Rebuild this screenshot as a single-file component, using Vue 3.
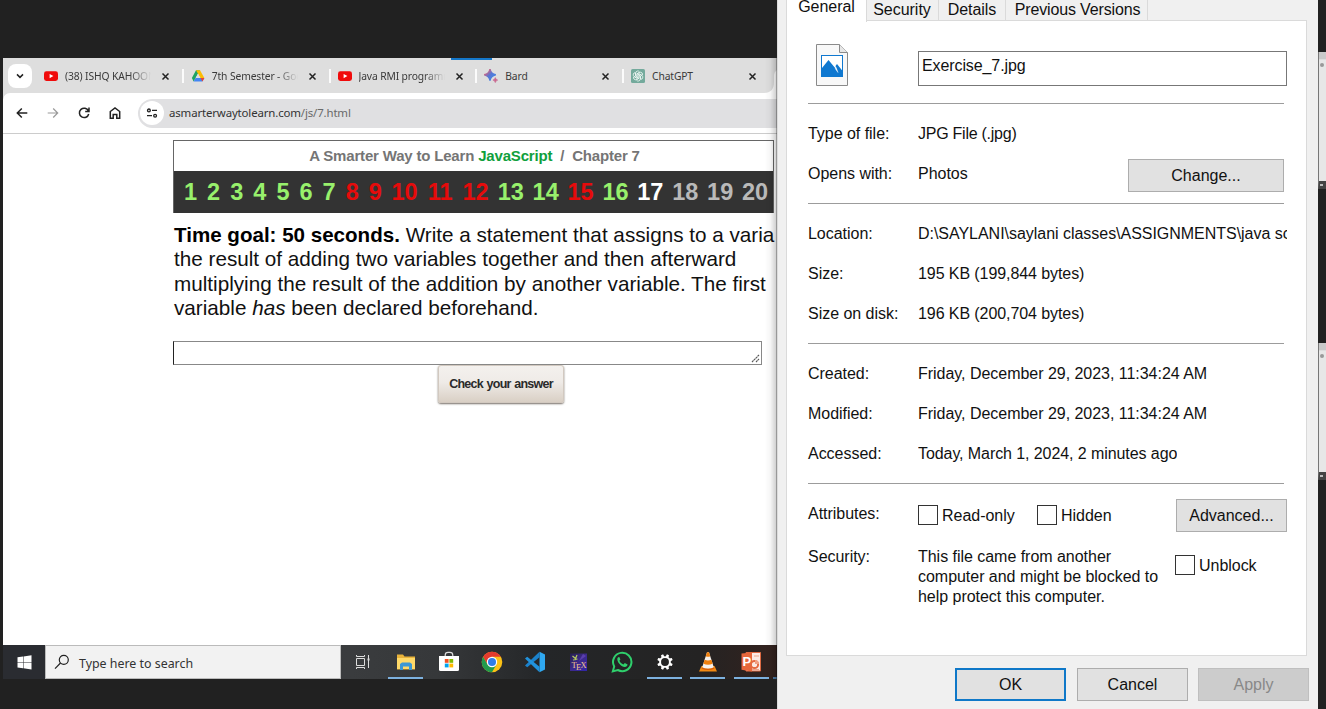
<script setup>
const tabs = [
  { icon: 'youtube', title: '(38) ISHQ KAHOON', fade: true },
  { icon: 'drive', title: '7th Semester - Goo', fade: true },
  { icon: 'youtube', title: 'Java RMI programm', fade: true },
  { icon: 'bard', title: 'Bard' },
  { icon: 'gpt', title: 'ChatGPT' },
]
const red = [8, 9, 10, 11, 12, 15]
const chapters = Array.from({ length: 20 }, (_, i) => {
  const n = i + 1
  const tone = n === 17 ? 'white' : n > 17 ? 'grey' : red.includes(n) ? 'red' : 'green'
  return { n, tone }
})
const apps = ['explorer', 'store', 'chrome', 'vscode', 'tex', 'whatsapp', 'settings', 'vlc', 'powerpoint']
const open = ['explorer', 'settings', 'vlc', 'powerpoint']
const groups = [
  [
    { k: 'Location:', v: 'D:\\SAYLANI\\saylani classes\\ASSIGNMENTS\\java script' },
    { k: 'Size:', v: '195 KB (199,844 bytes)', tight: true },
    { k: 'Size on disk:', v: '196 KB (200,704 bytes)', tight: true },
  ],
  [
    { k: 'Created:', v: 'Friday, December 29, 2023, 11:34:24 AM' },
    { k: 'Modified:', v: 'Friday, December 29, 2023, 11:34:24 AM' },
    { k: 'Accessed:', v: 'Today, March 1, 2024, 2 minutes ago', tight: true },
  ],
]
const teeth = [0, 45, 90, 135, 180, 225, 270, 315]
</script>

<template>
  <div class="desktop">
    <div class="sliver first"><i></i><b></b></div>
    <div class="sliver second"><i></i><b></b></div>

    <div class="browser">
      <div class="accent"></div>
      <div class="strip">
        <div class="chev">
          <svg width="10" height="10" viewBox="0 0 10 10"><path d="M2 3.4l3 3 3-3" fill="none" stroke="#222" stroke-width="1.5" /></svg>
        </div>
        <div v-for="(t, i) in tabs" :key="i" class="tab">
          <svg v-if="t.icon === 'youtube'" class="fav" viewBox="0 0 14 14"><rect y="2.3" width="14" height="9.6" rx="2.4" fill="#f00b0b" /><path d="M5.6 4.9v4.4L9.4 7.1z" fill="#fff" /></svg>
          <svg v-else-if="t.icon === 'drive'" class="fav" viewBox="0 0 14 14">
            <path d="M5 1.2h4L4.6 8.9 2.6 12.4.9 9z" fill="#1fa463" />
            <path d="M5 1.2h4l4.4 7.7H9.4z" fill="#fbbc04" />
            <path d="M4.6 8.9h8.8l-2 3.6H2.6z" fill="#4285f4" />
            <path d="M9.4 8.9h4l-2 3.6z" fill="#ea4335" />
            <path d="M7 4.6l2.4 4.3H4.6z" fill="#dedede" />
          </svg>
          <svg v-else-if="t.icon === 'bard'" class="fav" viewBox="0 0 14 14">
            <defs><linearGradient id="bard" x1="0" x2="1" y1="0" y2="1"><stop offset=".2" stop-color="#d9637c" /><stop offset=".5" stop-color="#5577d6" /><stop offset="1" stop-color="#3d8be8" /></linearGradient></defs>
            <path d="M6 0Q6.8 4.8 11.8 5.8 6.8 6.8 6 11.600 5.200 6.800.2 5.800 5.200 4.800 6 0z" fill="url(#bard)" stroke="url(#bard)" stroke-width="1.400" />
            <path d="M11.300 8.600q.4 2 2.400 2.500-2 .4-2.400 2.500-.4-2.100-2.400-2.500 2-.5 2.400-2.500z" fill="#c9668f" stroke="#c9668f" stroke-width=".6" />
          </svg>
          <svg v-else class="fav" viewBox="0 0 14 14">
            <rect width="14" height="14" rx="1.500" fill="#74aa9c" />
            <g fill="none" stroke="#eef7f4" stroke-width=".8">
              <path v-for="a in [0, 60, 120, 180, 240, 300]" :key="a" :transform="`rotate(${a} 7 7)`" d="M4.700 6.900V4.100a2.100 2.100 0 0 1 3.900-1.100M5.900 7.700V4.800L8.500 3.300" />
            </g>
          </svg>
          <span class="title" :class="{ fade: t.fade }">{{ t.title }}</span>
          <svg class="close" width="9" height="9" viewBox="0 0 9 9"><path d="M1.500 1.500l6 6m0-6l-6 6" stroke="#222" stroke-width="1.500" /></svg>
          <span v-if="i < 4" class="sep"></span>
        </div>
        <svg class="active-edge" width="13" height="25" viewBox="0 0 13 25"><path d="M0 25C7 25 10 21 10 14V8Q10 4 13 2V25z" fill="#fff" /></svg>
      </div>

      <div class="toolbar">
        <svg class="nav" viewBox="0 0 14 14"><path d="M12.300 7H2.500M6.800 2.500L2.300 7l4.500 4.500" stroke="#222" /></svg>
        <svg class="nav" viewBox="0 0 14 14"><path d="M1.700 7h9.800M7.200 2.500L11.700 7l-4.500 4.500" stroke="#9a9a9a" stroke-width="1.200" /></svg>
        <svg class="nav" viewBox="0 0 14 14"><path d="M11.400 4.900A4.700 4.700 0 1 0 11.700 8M12 1.600v3.900H8.200" stroke="#222" /></svg>
        <svg class="nav" viewBox="0 0 14 14"><path d="M2.300 12.300V5.500L7 1.900l4.700 3.600v6.800H8.800V8.600H5.200v3.700z" stroke="#222" /></svg>
        <div class="url">
          <div class="tune">
            <svg width="12" height="12" viewBox="0 0 12 12" fill="none" stroke="#222" stroke-width="1.300"><circle cx="2.900" cy="3.400" r="1.400" /><path d="M6 3.400h5M1 8.700h5" /><circle cx="9.100" cy="8.700" r="1.400" /></svg>
          </div>
          <span>asmarterwaytolearn.com<em>/js/7.html</em></span>
        </div>
      </div>

      <div class="page">
        <div class="banner">
          <div class="heading"><span>A Smarter Way to Learn <b>JavaScript</b>&nbsp; /&nbsp; Chapter 7</span></div>
          <div class="chapters"><span v-for="c in chapters" :key="c.n" :class="c.tone">{{ c.n }}</span></div>
        </div>
        <div class="question">
          <div><b>Time goal: 50 seconds.</b> Write a statement that assigns to a varia</div>
          <div>the result of adding two variables together and then afterward</div>
          <div>multiplying the result of the addition by another variable. The first</div>
          <div>variable <i>has</i> been declared beforehand.</div>
        </div>
        <div class="answer">
          <svg width="9" height="9" viewBox="0 0 9 9"><path d="M1 8l7-7M5 8l3-3" stroke="#555" stroke-width="1.100" stroke-dasharray="2.200 .4" /></svg>
        </div>
        <div class="check"><span>Check your answer</span></div>
      </div>

      <div class="taskbar">
        <div class="start">
          <svg width="15" height="15" viewBox="0 0 15 15" fill="#fff"><path d="M.5 2.300L6 1.500v5.600H.5zM6.500 1.400L14.500.2v6.900h-8zM.5 7.600H6v5.600l-5.500-.8zM6.500 7.600h8v6.900l-8-1.200z" /></svg>
        </div>
        <div class="search">
          <svg width="16" height="16" viewBox="0 0 16 16" fill="none" stroke="#222" stroke-width="1.200"><circle cx="9.800" cy="5.800" r="4.500" /><path d="M6.500 9L1 14.600" /></svg>
          <span>Type here to search</span>
        </div>
        <div class="view">
          <svg width="16" height="16" viewBox="0 0 16 16" fill="none" stroke="#ddd" stroke-width="1"><path d="M1.500 1v1.500h8V1M1.500 15v-1.500h8V15M1.500 4.500h8v7h-8zM13.500 1v13" /><path d="M12.500 5.500h2" stroke-width="2" /></svg>
        </div>
        <div v-for="a in apps" :key="a" class="app" :class="{ open: open.includes(a) }">
          <svg v-if="a === 'explorer'" viewBox="0 0 22 22">
            <path d="M2 3.500h6l1.500 2H20v13H2z" fill="#e9b33a" /><path d="M2 7h18v11H2z" fill="#ffd968" />
            <path d="M5 19v-6l2-1.500h8l2 1.500v6h-3v-3.500H8v3.500z" fill="#3d97d3" />
          </svg>
          <svg v-else-if="a === 'store'" viewBox="0 0 22 22">
            <path d="M7.200 6V4.200a2.800 2.800 0 0 1 2.800-2.800h2a2.800 2.800 0 0 1 2.800 2.800V6" fill="none" stroke="#ddd" stroke-width="1.200" />
            <path d="M1 5h20v13.500q0 1.500-1.500 1.500h-17Q1 20 1 18.500z" fill="#fff" />
            <path d="M6.800 8h3.800v3.800H6.800z" fill="#f25022" /><path d="M11.400 8h3.800v3.800h-3.800z" fill="#7fba00" /><path d="M6.800 12.600h3.800v3.800H6.800z" fill="#00a4ef" /><path d="M11.400 12.600h3.800v3.800h-3.800z" fill="#ffb900" />
          </svg>
          <svg v-else-if="a === 'chrome'" viewBox="0 0 22 22">
            <circle cx="11" cy="11" r="10.300" fill="#fbc116" />
            <path d="M2.080 5.850A10.300 10.300 0 0 1 19.920 5.850H11L6.540 13.580z" fill="#e33b2e" />
            <path d="M2.080 5.850A10.300 10.300 0 0 0 11 21.300L15.460 13.580 11 16.100 6.540 13.580z" fill="#229b4c" />
            <circle cx="11" cy="11" r="5.200" fill="#fff" /><circle cx="11" cy="11" r="4" fill="#2f7de9" />
          </svg>
          <svg v-else-if="a === 'vscode'" viewBox="0 0 22 22">
            <path d="M15.500.8L21 3.400v15.200l-5.500 2.600z" fill="#2fa8f0" />
            <path d="M15.500.8v5.500L3.200 16.200 1 14.500z" fill="#1b82cc" /><path d="M15.500 21.200v-5.500L3.200 5.800 1 7.500z" fill="#2192dc" />
          </svg>
          <svg v-else-if="a === 'tex'" viewBox="0 0 22 22">
            <defs><linearGradient id="tex" x1="0" x2="1" y1="0" y2="1"><stop offset="0" stop-color="#25204d" /><stop offset=".5" stop-color="#3d2a8c" /><stop offset="1" stop-color="#3026a8" /></linearGradient></defs>
            <rect x="3" y="2.500" width="17" height="17.500" fill="url(#tex)" />
            <path d="M5.500 5l3.500 3M10 4l-2 5M6 9l4.500-1" stroke="#b5cc5e" stroke-width="1.200" /><path d="M16 3l-4 7 7-5z" fill="#5b3fae" />
            <text x="4.500" y="16.500" class="tex">T</text><text x="9" y="19" class="tex">E</text><text x="13.500" y="16.500" class="tex">X</text>
          </svg>
          <svg v-else-if="a === 'whatsapp'" viewBox="0 0 22 22">
            <path d="M1.800 20.400l1.400-5A9.200 9.200 0 1 1 6.800 19z" fill="none" stroke="#2fcf6c" stroke-width="2" />
            <path d="M7.700 6c-1 .4-1.600 1.500-1.300 2.900.7 3.400 3.900 6.400 7.200 7 1.500.2 2.800-.8 3-2.300l-2.800-1.500-1.400 1.400c-1.900-.8-3.200-2.100-4-3.800l1-1.300L8.300 6z" fill="#2fcf6c" />
          </svg>
          <svg v-else-if="a === 'settings'" viewBox="0 0 22 22">
            <circle cx="11" cy="11" r="4.900" fill="none" stroke="#fff" stroke-width="1.900" />
            <path v-for="r in teeth" :key="r" :transform="`rotate(${r + 22.5} 11 11)`" d="M9.400 6l.5-2.800h2.200l.5 2.800z" fill="#fff" />
          </svg>
          <svg v-else-if="a === 'vlc'" viewBox="0 0 22 22">
            <path d="M4.500 15h13l2.500 5.500H2z" fill="#f28a13" />
            <path d="M10 1.200h2l4.800 15q-5.800 3-11.600 0z" fill="#f6f1ec" />
            <path d="M10 1.200h2l1.300 4q-2.300 1-4.600 0z" fill="#ef7f0c" /><path d="M7.600 8.700q3.400 1.400 6.800 0l1.200 4q-4.600 1.900-9.200 0z" fill="#ef7f0c" /><path d="M5 16.400l-.4 1.300q6.400 2.800 12.800 0l-.4-1.300q-6 2.600-12 0z" fill="#d85d09" />
          </svg>
          <svg v-else viewBox="0 0 22 22">
            <path d="M6 1.500h14.500v18.500H6z" fill="#fbeae3" stroke="#df6a43" /><path d="M1.500 2.500l10.500-1v19l-10.500-1.800z" fill="#e7673c" />
            <circle cx="14.500" cy="13.500" r="3.600" fill="none" stroke="#e46a40" stroke-width="2" /><path d="M15 13v-4a4 4 0 0 1 4 4z" fill="#f0a083" /><path d="M12 18.500h7M14 5h5" stroke="#e9a58c" />
            <text x="2.500" y="15.300" class="ppt">P</text>
          </svg>
        </div>
        <div class="next"></div>
      </div>
      <div class="shade"></div>
    </div>

    <div class="dialog">
      <div class="dtabs">
        <span class="on">General</span><span class="t2">Security</span><span class="t3">Details</span><span class="t4">Previous Versions</span>
      </div>
      <div class="panel">
        <div class="file">
          <svg width="32" height="42" viewBox="0 0 32 42">
            <path d="M.5.500h23l8 8v33H.5z" fill="#f8f8f8" stroke="#8a8a8a" /><path d="M23.500.5v8h8" fill="#e6e6e6" stroke="#8a8a8a" />
            <rect x="5.500" y="11.500" width="21" height="21" fill="#fff" stroke="#0f78d0" />
            <path d="M6 24l6.500-8 6 7.300L21 20l6 7.500V32.500H6z" fill="#0f78d0" /><path d="M18 20.500q2.500 2.500 4 8l-2.500-3.500z" fill="#fff" stroke="#fff" stroke-width=".4" />
          </svg>
          <div class="name">Exercise_7.jpg</div>
        </div>
        <hr />
        <div class="row"><label>Type of file:</label><span class="tight2">JPG File (.jpg)</span></div>
        <div class="row"><label>Opens with:</label><span>Photos</span><button class="change">Change...</button></div>
        <hr />
        <template v-for="(g, i) in groups" :key="i">
          <div v-for="r in g" :key="r.k" class="row"><label>{{ r.k }}</label><span :class="{ tight: r.tight }">{{ r.v }}</span></div>
          <hr />
        </template>
        <div class="row attrs">
          <label>Attributes:</label>
          <div class="cb ro"><i></i><span>Read-only</span></div>
          <div class="cb"><i></i><span>Hidden</span></div>
          <button class="adv">Advanced...</button>
        </div>
        <div class="sec">
          <label>Security:</label>
          <p>This file came from another<br />computer and might be blocked to<br />help protect this computer.</p>
          <div class="cb"><i></i><span>Unblock</span></div>
        </div>
      </div>
      <div class="buttons">
        <button class="ok">OK</button><button>Cancel</button><button class="off">Apply</button>
      </div>
    </div>
  </div>
</template>

<style>
body { margin: 0; overflow: hidden; background: #212121; }
</style>

<style scoped>
* { box-sizing: border-box; }
.desktop { position: relative; width: 1326px; height: 709px; overflow: hidden; background: #212121; font-family: "Liberation Sans", Arial, sans-serif; }
svg { display: block; flex: none; }

.sliver { position: absolute; left: 1318px; width: 8px; height: 137px; background: #e7e7e7; border-left: 1px solid #777; border-bottom: 8px solid #444; }
.sliver.first { top: 52px; }
.sliver.second { top: 343px; }
.sliver::before { content: ""; display: block; height: 7px; background: #c9c9c9; border-bottom: 1px solid #ddd; }
.sliver i { display: block; width: 4px; height: 4px; margin: 3px 0 0 1px; border-radius: 2px; background: #999; }
.sliver b { position: absolute; left: 1px; bottom: -5px; width: 3px; height: 2px; background: #bbb; }

.browser { position: absolute; left: 3px; top: 58px; width: 774px; height: 621px; display: flex; flex-direction: column; background: #dedede; overflow: hidden; }
.accent { position: absolute; left: 448px; top: 0; width: 41px; height: 2px; background: #1477c9; }
.shade { position: absolute; right: 0; top: 0; width: 12px; height: 100%; background: linear-gradient(90deg, rgba(0,0,0,0), rgba(0,0,0,.04) 50%, rgba(0,0,0,.18)); border-right: 1px solid rgba(0,0,0,.4); }
.strip { flex: none; height: 35px; display: flex; font-family: "Noto Sans", "Open Sans", sans-serif; }
.chev { flex: none; width: 24px; height: 24px; margin: 6px 12px 0 5px; border-radius: 8px; background: #fff; display: flex; align-items: center; justify-content: center; }
.tab { flex: none; width: 146.750px; height: 36px; display: flex; align-items: center; }
.fav { width: 14px; height: 14px; }
.title { width: 86px; margin-left: 7px; font-size: 10.300px; line-height: 16px; color: #3a3a3a; white-space: nowrap; overflow: hidden; letter-spacing: -.12px; }
.fade { -webkit-mask-image: linear-gradient(90deg, #000 65px, transparent 86px); mask-image: linear-gradient(90deg, #000 65px, transparent 86px); }
.close { margin-left: 10.200px; }
.sep { width: 2px; height: 14px; margin-left: 11.800px; background: #fbfbfb; }
.active-edge { position: absolute; left: 761px; top: 10px; }

.toolbar { flex: none; height: 41px; display: flex; align-items: center; padding-left: 12px; background: #fff; border-radius: 7px 0 0 0; box-shadow: inset 0 -1px #ccc; padding-bottom: 1px; }
.toolbar + .page { margin-top: 0; }
.nav { width: 14px; height: 14px; margin-right: 17px; fill: none; stroke-width: 1.500; }
.url { flex: 1; height: 29px; margin-left: -1px; border-radius: 15px 0 0 15px; background: #e0e0e2; display: flex; align-items: center; font: 11.450px "Noto Sans", "Open Sans", sans-serif; color: #333; letter-spacing: -.15px; }
.url span { margin-top: -2px; }
.url em { font-style: normal; color: #6a6a6a; }
.tune { width: 24px; height: 24px; margin: 0 5px 0 2px; border-radius: 12px; background: #fff; display: flex; align-items: center; justify-content: center; }

.page { flex: 1; padding: 6px 0 0 170px; white-space: nowrap; overflow: hidden; background: #fff; }
.banner { width: 601px; height: 73px; background: #333; border: 1px solid #666; border-width: 1px 1px 0; }
.heading { height: 30px; background: #fff; text-align: center; font: bold 15px/30px "Liberation Sans", Arial, sans-serif; color: #757575; letter-spacing: -.18px; padding-left: 2px; }
.heading b { color: #10a03c; }
.chapters { display: grid; grid-template-columns: repeat(9, 23.100px) repeat(3, 35.500px) repeat(8, 34.900px); padding-left: 5px; font-size: 23.500px; font-weight: bold; line-height: 42px; text-align: center; }
.green { color: #98f06c; }
.red { color: #e60b0b; }
.white { color: #fff; }
.grey { color: #b9b9b9; }
.question { margin-top: 10px; padding-left: 1px; font-size: 20.700px; line-height: 24.300px; color: #111; }
.question b { color: #000; font-size: 20.570px; line-height: 1; }
.answer { width: 589px; height: 24px; margin-top: 21px; border: 1px solid #888; border-left-color: #222; display: flex; justify-content: flex-end; align-items: flex-end; padding: 0 1px 1px 0; }
.check { width: 126px; height: 38px; margin-left: 265px; border-radius: 3px; background: linear-gradient(#f4f1ee, #efebe7 45%, #d8cec3); box-shadow: inset 0 0 0 1px #d2c9c0, 0 1px 2px #776f67; display: flex; align-items: center; justify-content: center; font-weight: bold; font-size: 12.500px; color: #2a2a2a; letter-spacing: -.74px; word-spacing: .8px; }

.taskbar { flex: none; height: 34px; display: flex; background: linear-gradient(90deg, #303238 0, #3a3c3e 45%, #36383a 56%, #242628 70%, #242323 90%, #33221e 100%); }
.start { width: 42px; display: flex; align-items: center; justify-content: center; background: #2a2c31; }
.search { width: 296px; background: #f2f2f2; border: 1px solid #bbb; display: flex; align-items: center; padding-left: 8px; font: 12.400px "Noto Sans", "Open Sans", sans-serif; color: #333; }
.search span { margin: 2px 0 0 9px; }
.view { width: 43px; display: flex; align-items: center; justify-content: center; }
.app { flex: none; width: 43.200px; height: 34px; display: flex; align-items: center; justify-content: center; }
.app svg { width: 22px; height: 22px; }
.open { background: linear-gradient(#7db1df, #7db1df) 50% 100% / 35px 2px no-repeat; }
.tex { font: 8.500px "Liberation Serif", serif; fill: #f2c48c; }
.ppt { font: bold 13px "Liberation Sans", sans-serif; fill: #fff; }
.next { flex: 1; border-bottom: 2px solid #4d7aa5; }

.dialog { position: absolute; left: 777px; top: 0; width: 541px; height: 709px; background: #f0f0f0; font-size: 16px; line-height: 20px; color: #111; border-left: 1px solid #dcdcdc; letter-spacing: -.03px; }
.dtabs { height: 20px; display: flex; padding-left: 8px; white-space: nowrap; }
.dtabs span { height: 20px; border-right: 1px solid #dadada; text-align: center; line-height: 19px; }
.dtabs .on { position: relative; width: 81px; height: 22px; background: #fff; border-left: 1px solid #dadada; line-height: 14px; }
.dtabs .t2 { width: 72px; padding-right: 1px; }
.t3 { width: 67px; }
.dtabs .t4 { width: 142px; letter-spacing: -.15px; padding-left: 2px; }
.panel { width: 521px; height: 636px; margin-left: 8px; padding: 0 0 0 21px; background: #fff; border: 1px solid #dadada; }
.file { height: 72px; display: flex; padding: 23px 0 0 8px; }
.name { width: 369px; height: 35px; margin: 7px 0 0 70px; border: 1px solid #777; padding-left: 3px; line-height: 28px; letter-spacing: -.1px; }
hr { width: 476px; height: 20px; margin: 0; border: 0; background: linear-gradient(#9c9c9c, #9c9c9c) 0 10px / 100% 1px no-repeat; }
.row { width: 479px; height: 40px; display: flex; line-height: 42px; white-space: nowrap; }
label { flex: none; width: 110px; }
.row > span { overflow: hidden; }
.tight { letter-spacing: -.08px; }
.tight2 { letter-spacing: -.25px; }
button { height: 33px; padding: 0; font: 16px "Liberation Sans", Arial, sans-serif; color: #111; background: #e1e1e1; border: 1px solid #adadad; }
.change { width: 156px; margin: 6px 3px 0 auto; }
.adv { width: 111px; margin: 6px 0 0 auto; }
.cb { display: flex; align-items: center; line-height: 20px; height: 20px; }
.cb i { width: 20px; height: 20px; margin-right: 4px; border: 1px solid #333; background: #fff; }
.cb span { margin-top: 2px; }
.attrs .cb { margin-top: 12px; }
.attrs .ro { width: 119px; }
.sec { height: 62px; display: flex; margin-top: 14px; }
.sec p { width: 257px; margin: 0; white-space: nowrap; }
.sec .cb { margin-top: 8px; }
.buttons { display: flex; gap: 11px; padding: 12px 0 0 177px; }
.buttons button { width: 111px; }
.buttons button + button + button { margin-left: -1px; }
.buttons .ok { border: 2px solid #0f78c8; }
.buttons .off { background: #ccc; border-color: #bfbfbf; color: #888; }
</style>
